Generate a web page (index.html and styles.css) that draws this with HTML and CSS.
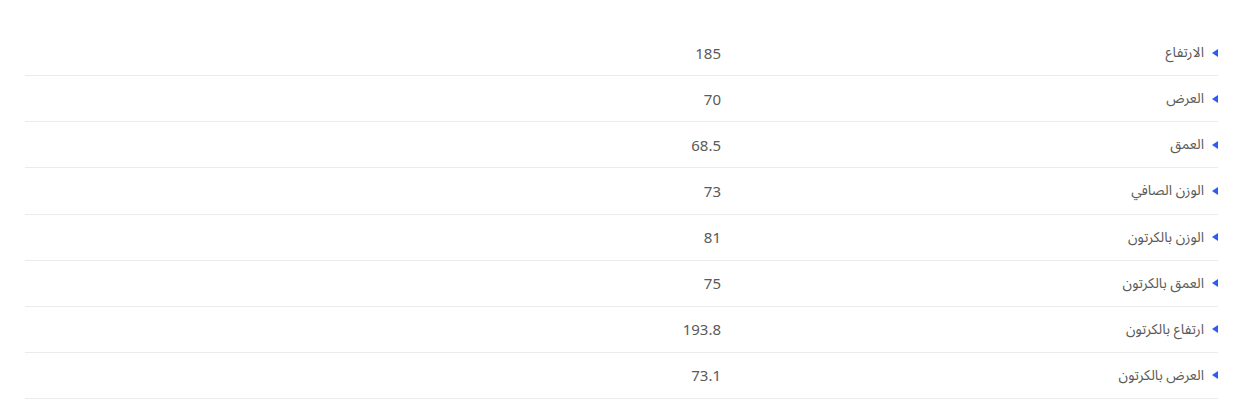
FILE: index.html
```html
<!DOCTYPE html>
<html lang="ar" dir="rtl">
<head>
<meta charset="utf-8">
<link rel="stylesheet" href="styles.css">
</head>
<body>
<div class="specs">
  <div class="row"><div class="label">الارتفاع</div><div class="value">185</div></div>
  <div class="row"><div class="label">العرض</div><div class="value">70</div></div>
  <div class="row"><div class="label">العمق</div><div class="value">68.5</div></div>
  <div class="row"><div class="label">الوزن الصافي</div><div class="value">73</div></div>
  <div class="row"><div class="label">الوزن بالكرتون</div><div class="value">81</div></div>
  <div class="row"><div class="label">العمق بالكرتون</div><div class="value">75</div></div>
  <div class="row"><div class="label">ارتفاع بالكرتون</div><div class="value">193.8</div></div>
  <div class="row"><div class="label">العرض بالكرتون</div><div class="value">73.1</div></div>
</div>
</body>
</html>
```
FILE: styles.css
```css
html, body { margin: 0; background: #fff; }
body {
  font-family: "Noto Sans Arabic", "Noto Sans", "DejaVu Sans", sans-serif;
  font-size: 14px;
  color: #5a5a5a;
  padding: 30px 22px 0 25px;
}
.specs { display: flex; flex-direction: column; }
.row {
  display: grid;
  grid-template-columns: 497px 1fr;
  height: 45.14px;
  border-bottom: 1px solid #ebebeb;
  align-items: center;
}
.label {
  display: flex;
  align-items: center;
  gap: 8px;
}
.label::before {
  content: "";
  flex: none;
  width: 0; height: 0;
  border-top: 4.5px solid transparent;
  border-bottom: 4.5px solid transparent;
  border-right: 6px solid #2d5bf5;
}
.value {
  font-family: "Noto Sans", "DejaVu Sans", sans-serif;
  font-size: 15px;
}
```
